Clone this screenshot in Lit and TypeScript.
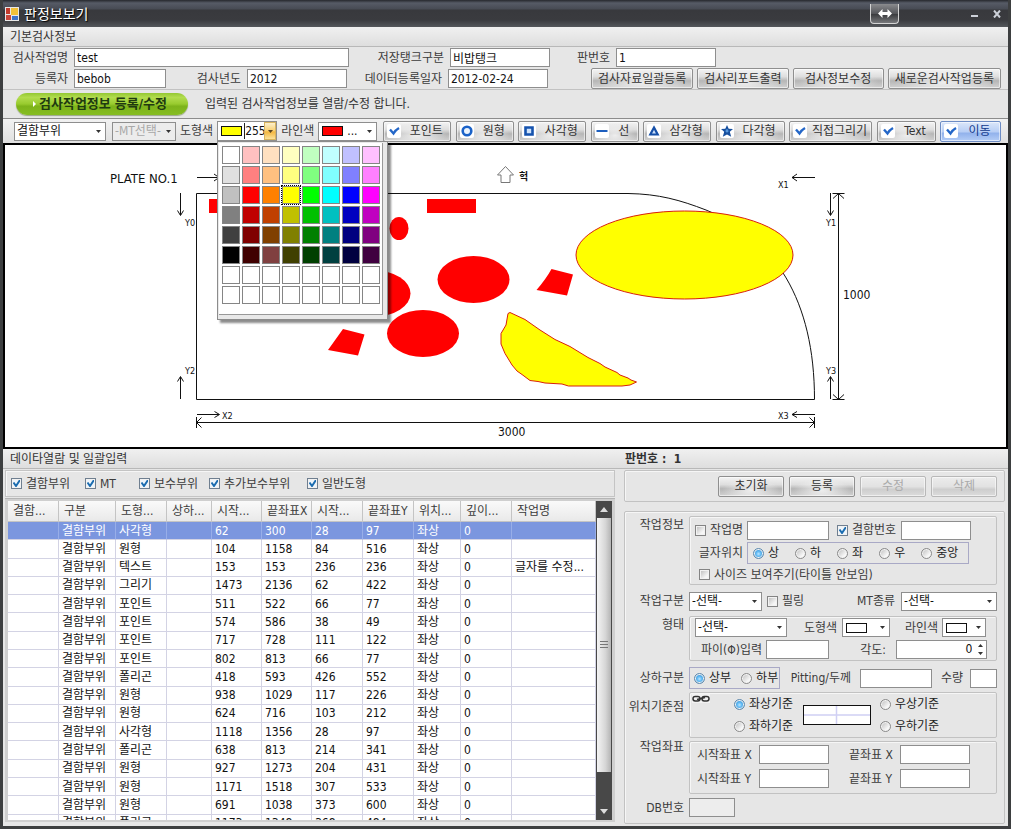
import { LitElement, html, css, svg, nothing } from "lit";
import { customElement, property, state } from "lit/decorators.js";
import { classMap } from "lit/directives/class-map.js";
import { styleMap } from "lit/directives/style-map.js";

const controls = css`
  * { box-sizing: border-box; }
  button, input, select { font: inherit; margin: 0; color: #111; border-radius: 0; }
  label, .label { color: #3c3c3c; white-space: nowrap; }
  .text {
    display: block; width: 100%; min-width: 0; height: 19px; padding: 0 2px;
    border: 1px solid #8e8e8e; background: #fff; outline: none; line-height: 17px;
  }
  .text[readonly] { background: #ededed; }
  select {
    appearance: none; display: block; width: 100%; min-width: 0; height: 19px;
    padding: 0 14px 0 2px; border: 1px solid #8e8e8e; outline: none; line-height: 17px;
    background: #fff url("data:image/svg+xml,%3Csvg xmlns='http://www.w3.org/2000/svg' width='5' height='3'%3E%3Cpath d='M0 0h5L2.500 3z' fill='%23333'/%3E%3C/svg%3E") no-repeat right 4px center;
  }
  select:disabled { color: #a8a8a8; background-color: #ececec; opacity: 1; }
  .check, .radio { display: flex; align-items: center; gap: 4px; }
  .radio { color: #222; }
  .check input {
    appearance: none; flex: none; width: 11px; height: 11px; border: 1px solid #848484;
    background: linear-gradient(135deg, #b9b9b9, #f6f6f6 70%); box-shadow: inset 0 0 0 1px #f2f2f2;
  }
  .check input:checked {
    border-color: #6f7f90;
    background: #eef5fb url("data:image/svg+xml,%3Csvg xmlns='http://www.w3.org/2000/svg' width='9' height='9'%3E%3Cpath d='M1.500 3.500L4 7L8 1' fill='none' stroke='%231b6cb0' stroke-width='2'/%3E%3C/svg%3E") center no-repeat;
  }
  .radio input {
    appearance: none; flex: none; width: 11px; height: 11px; border: 1px solid #8a8a8a;
    border-radius: 50%; background: linear-gradient(135deg, #bcbcbc, #fafafa 75%);
    box-shadow: inset 0 0 0 1px #f4f4f4;
  }
  .radio input:checked {
    border-color: #5e89ad;
    background: radial-gradient(circle at 50% 55%, #bfe6ff 0, #6cc0f6 2px, #3f9ee0 4px, #b8dcf4 5px);
  }
  .btn {
    display: flex; align-items: center; justify-content: center; height: 21px; padding: 0 6px;
    border: 1px solid #8f8f8f; border-radius: 2px; color: #333; white-space: nowrap;
    background:
      radial-gradient(ellipse 45% 60% at 50% 70%, rgba(255,255,255,.75), rgba(255,255,255,0)),
      linear-gradient(180deg, #f4f4f4, #dedede 40%, #b6b6b6 62%, #d2d2d2);
    box-shadow: inset 0 0 0 1px rgba(255,255,255,.55);
  }
  .btn:disabled { color: #aaa; border-color: #b8b8b8; background: linear-gradient(180deg, #ececec, #e2e2e2 50%, #cecece 65%, #dcdcdc); }
  .swatch-select { display: flex; align-items: center; width: 100%; height: 19px; border: 1px solid #8e8e8e; background: #fff; padding-left: 3px; }
  .swatch-select select { flex: 1; width: 0; height: 17px; border: 0; background-color: transparent; padding-left: 4px; }
  .swatch { flex: none; width: 21px; height: 10px; border: 1px solid #111; }
`;

const PALETTE = [
  "#ffffff", "#ffc0c0", "#ffe0c0", "#ffffc0", "#c0ffc0", "#c0ffff", "#c0c0ff", "#ffc0ff",
  "#e0e0e0", "#ff8080", "#ffc080", "#ffff80", "#80ff80", "#80ffff", "#8080ff", "#ff80ff",
  "#c0c0c0", "#ff0000", "#ff8000", "#ffff00", "#00ff00", "#00ffff", "#0000ff", "#ff00ff",
  "#808080", "#c00000", "#c04000", "#c0c000", "#00c000", "#00c0c0", "#0000c0", "#c000c0",
  "#404040", "#800000", "#804000", "#808000", "#008000", "#008080", "#000080", "#800080",
  "#000000", "#400000", "#804040", "#404000", "#004000", "#004040", "#000040", "#400040",
  ...Array(16).fill("#ffffff"),
];

@customElement("color-combo")
class ColorCombo extends LitElement {
  @state() private selected = 19;
  @state() private open = true;

  static styles = [controls, css`
    :host { display: block; position: relative; height: 20px; }
    .field { display: flex; align-items: center; height: 20px; border: 1px solid #8e8e8e; background: #fff; padding-left: 3px; }
    .field input { width: 0; flex: 1; min-width: 0; height: 16px; border: 0; border-left: 1px solid #222; padding: 0; outline: none; margin-left: 2px; }
    .drop { flex: none; width: 12px; height: 18px; padding: 0; border: 1px solid #d8b45e; display: grid; place-items: center;
      background: linear-gradient(180deg, #fdf0cc, #f8cf70 50%, #f3b63e 55%, #fbe29a); }
    .popup {
      position: absolute; z-index: 5; left: 0; top: 20px; width: 171px; height: 179px;
      border: 1px solid #8c8c8c; background: #e9e9e9; padding: 1px 4px 4px 1px;
      box-shadow: 3px 3px 2px rgba(0,0,0,.45);
    }
    .grid {
      height: 100%; display: grid; grid-template-columns: repeat(8, 18px); grid-auto-rows: 18px; gap: 2px;
      padding: 3px 0 0 3px; background: #fff; border-right: 1px solid #999; border-bottom: 1px solid #999;
    }
    .cell { padding: 0; border: 1px solid #858585; }
    .cell.on { outline: 1px dotted #000; }
  `];

  render() {
    return html`
      <div class="field">
        <span class="swatch" style=${styleMap({ background: PALETTE[this.selected] })}></span>
        <input id="rgb" aria-label="도형색" value="255, 255, 0">
        <button class="drop" aria-label="색상 열기" @click=${() => (this.open = !this.open)}>
          <svg width="5" height="3"><path d="M0 0h5L2.500 3z" fill="#5a4520"/></svg>
        </button>
      </div>
      ${this.open ? html`<div class="popup"><div class="grid">
        ${PALETTE.map((c, i) => html`<button aria-label=${c} class=${classMap({ cell: true, on: i === this.selected })}
          style=${styleMap({ background: c })} @click=${() => (this.selected = i)}></button>`)}
      </div></div>` : nothing}
    `;
  }
}

const check = svg`<path d="M3 5.500l3.500 4Q8.500 6 12 4" fill="none" stroke="#2467c8" stroke-width="2.400"/>`;
const TOOLS = [
  { text: "포인트", w: 68, icon: check },
  { text: "원형", w: 58, icon: svg`<circle cx="7" cy="7" r="4.300" fill="#eaf3fd" stroke="#1a62c8" stroke-width="2.600"/>` },
  { text: "사각형", w: 68, icon: svg`<path d="M3.500 3.500h7v7h-7z" fill="#cfe3fb" stroke="#1653ae" stroke-width="2.600"/>` },
  { text: "선", w: 48, icon: svg`<path d="M1.500 7h11" stroke="#1e5fbe" stroke-width="2"/>` },
  { text: "삼각형", w: 68, icon: svg`<path d="M7 3.500l3.700 7H3.300z" fill="#cfe2fa" stroke="#1750a8" stroke-width="2.200"/>` },
  { text: "다각형", w: 69, icon: svg`<path d="M7 1l1.700 3.800 4.300.2-3.200 2.800 1.400 5L7 10.500l-4.200 2.300 1.400-5L1 5l4.300-.2z" fill="#17509f"/><path d="M7 5v3.500M5.500 7h3" stroke="#6fb0f2"/>` },
  { text: "직접그리기", w: 83, icon: check },
  { text: "Text", w: 59, icon: check },
  { text: "이동", w: 61, icon: check, on: true },
];

@customElement("tool-bar")
class ToolBar extends LitElement {
  static styles = [controls, css`
    :host { display: flex; align-items: center; height: 25px; padding: 0 7px 0 11px; gap: 4px;
      border-top: 1px solid #8c8c8c; background: linear-gradient(180deg, #f2f2f2, #e0e0e0); }
    .part { width: 92px; }
    .mt { width: 64px; margin-left: 2px; }
    color-combo { width: 60px; }
    .line { width: 59px; }
    .line .swatch { background: #f00; }
    .tools { flex: 1; display: flex; justify-content: space-between; margin-left: 2px; }
    .tool { gap: 4px; padding: 0 3px; justify-content: flex-start; }
    .tool svg { flex: none; background: #fff; border-radius: 2px; }
    .tool span { flex: 1; text-align: center; }
    .tool.on { color: #123a8c; border-color: #6d8cc4;
      background: linear-gradient(180deg, #dbe7fa, #b9cff5 50%, #93b3ec 60%, #b4cdf6); }
  `];
  render() {
    return html`
      <select class="part" aria-label="부위"><option>결함부위</option></select>
      <select class="mt" aria-label="MT" disabled><option>-MT선택-</option></select>
      <span class="label">도형색</span>
      <color-combo></color-combo>
      <label for="line">라인색</label>
      <span class="swatch-select line"><span class="swatch"></span><select id="line"><option>...</option></select></span>
      <div class="tools">
        ${TOOLS.map((t) => html`<button class=${classMap({ btn: true, tool: true, on: !!t.on })} style=${styleMap({ width: `${t.w}px` })}>
          <svg width="14" height="14">${t.icon}</svg><span>${t.text}</span></button>`)}
      </div>`;
  }
}

@customElement("plate-view")
class PlateView extends LitElement {
  static styles = css`
    :host { display: block; border: 2px solid #000; background: #fff; }
    svg { display: block; width: 100%; height: 302px; }
    .ink { fill: none; stroke: #111; stroke-width: 1; }
    .red { fill: #f00; }
    .yellow { fill: #ff0; stroke: #d8200c; stroke-width: 1; }
    text { font-size: 12px; fill: #111; }
    .title { font-size: 13px; }
    .small { font-size: 9px; }
    .bold { font-size: 10px; font-weight: 700; }
  `;
  render() {
    return html`<svg viewBox="5 145 1001 302" preserveAspectRatio="xMidYMid meet" role="img" aria-label="PLATE NO.1">
      <path class="ink" d="M196.500 399.500V193.500H628C659 194 680 200 706 210C775 238 814.500 300 814.500 399.500Z"/>
      <g class="red">
        <rect x="209" y="199" width="48" height="14"/><rect x="427" y="199" width="49" height="14"/>
        <ellipse cx="399" cy="228.500" rx="9.500" ry="11.500"/>
        <ellipse cx="473.500" cy="279.500" rx="36" ry="23.500"/>
        <ellipse cx="374.500" cy="293.500" rx="36" ry="23"/>
        <ellipse cx="423" cy="333.500" rx="36" ry="23.500"/>
        <path d="M551.500 269L573 274.500L567 295.500L536.500 290Q546 279 551.500 269zM343 329L364.500 334.500L358 355.500L328 350z"/>
      </g>
      <g class="yellow">
        <ellipse cx="684.500" cy="255" rx="108.500" ry="44"/>
        <path stroke-linejoin="round" d="M510 312.500L525 319.500L540 330L555 339.500L570 346.500L588 357.500L600 363.500L605 367L617 372.500L620 375L628 378L631 380L636.500 382L630 385L622 386H568.500L562 384L545 383L538 381.500L530 380.500L522 374.500L517 371L512 365L505 353.500L501 344V333.500L506 325L508 313.500z"/>
      </g>
      <g class="ink">
        <path d="M197 177.500h22M214 174l5 3.500-5 3.500"/>
        <path d="M815 177.500h-23M797 174l-5 3.500 5 3.500"/>
        <path d="M180.500 193v22M177.500 210.500l3 5 3-5M180.500 399v-22M177.500 381.500l3-5 3 5"/>
        <path d="M830.500 193v22M827.500 210.500l3 5 3-5M830.500 399v-22M827.500 381.500l3-5 3 5"/>
        <path d="M197 414.500h22M214.500 411.500l5 3-5 3M815 414.500h-23M797 411.500l-5 3 5 3"/>
        <path d="M196.500 422.500H814.500M196.500 417v11M201.500 417.500l-5 5 5 5M814.500 417v11M809.500 417.500l5 5-5 5"/>
        <path d="M838.500 193.500V399.500M832.500 193.500h12M833 198.500l5.500-5 5.500 5M832.500 399.500h12M833 394.500l5.500 5 5.500-5"/>
        <path stroke="#777" d="M505.500 166.500l8 8.500h-3.500v7.500h-9v-7.500h-3.500z"/>
      </g>
      <text class="title" x="110" y="183">PLATE NO.1</text>
      <text x="498" y="436">3000</text>
      <text x="843" y="299">1000</text>
      <text class="bold" x="519" y="180">헉</text>
      <g>
        <text class="small" x="778" y="188">X1</text><text class="small" x="185" y="226">Y0</text>
        <text class="small" x="826" y="226">Y1</text><text class="small" x="185" y="374">Y2</text>
        <text class="small" x="826" y="374">Y3</text><text class="small" x="222" y="419">X2</text>
        <text class="small" x="778" y="419">X3</text>
      </g>
    </svg>`;
  }
}

const COLUMNS = ["결함...", "구분", "도형...", "상하...", "시작...", "끝좌표X", "시작...", "끝좌표Y", "위치...", "깊이...", "작업명"];
const ROWS: [string, number, number, number, number, string?][] = [
  ["사각형", 62, 300, 28, 97], ["원형", 104, 1158, 84, 516], ["텍스트", 153, 153, 236, 236, "글자를 수정..."],
  ["그리기", 1473, 2136, 62, 422], ["포인트", 511, 522, 66, 77], ["포인트", 574, 586, 38, 49],
  ["포인트", 717, 728, 111, 122], ["포인트", 802, 813, 66, 77], ["폴리곤", 418, 593, 426, 552],
  ["원형", 938, 1029, 117, 226], ["원형", 624, 716, 103, 212], ["사각형", 1118, 1356, 28, 97],
  ["폴리곤", 638, 813, 214, 341], ["원형", 927, 1273, 204, 431], ["원형", 1171, 1518, 307, 533],
  ["원형", 691, 1038, 373, 600], ["폴리곤", 1173, 1348, 368, 484],
];

@customElement("data-list")
class DataList extends LitElement {
  @property({ type: Number }) selected = 0;
  static styles = [controls, css`
    :host { display: flex; flex-direction: column; min-height: 0; padding: 1px 2px 4px 2px; }
    .filters { display: flex; align-items: center; height: 27px; padding: 0 5px; border: 1px solid #c4c4c4; box-shadow: inset 1px 1px 0 #f6f6f6; }
    .filters .check:nth-child(1) { width: 74px; }
    .filters .check:nth-child(2) { width: 54px; }
    .filters .check:nth-child(3) { width: 70px; }
    .filters .check:nth-child(4) { width: 98px; }
    .frame { flex: 1; min-height: 0; display: flex; margin: 1px 0 0; padding: 2px 3px; border-top: 1px solid #b4b4b4; background: #cfcfcf; }
    .scroll { flex: 1; min-width: 0; overflow: hidden; background: #fff; }
    table { width: 100%; height: 332px; border-collapse: separate; border-spacing: 0; table-layout: fixed; }
    th, td { padding: 0 0 0 3px; text-align: left; font-weight: 400; white-space: nowrap; overflow: hidden; line-height: 16px; }
    th { height: 21px; padding-left: 5px; color: #3c3c3c; background: linear-gradient(180deg, #fafafa, #e9e9e9); border-right: 1px solid #c4c4c4; border-bottom: 1px solid #c4c4c4; }
    td { color: #111; border-right: 1px solid #d3d3e4; border-bottom: 1px solid #d3d3e4; }
    .on td { background: #7b96df; color: #fff; border-right-color: #98aee8; }
    .c51 { width: 51px; } .c57 { width: 57px; } .c45 { width: 45px; } .c50 { width: 50px; } .c47 { width: 47px; }
    .bar { flex: none; width: 16px; display: flex; flex-direction: column; background: #484848; }
    .arrow { height: 17px; padding: 0; border: 0; background: none; display: grid; place-items: center; }
    .track { flex: 1; min-height: 0; }
    .thumb { height: 89%; margin: 0 1px; display: grid; place-items: center; background: linear-gradient(90deg, #f4f4f4, #d6d6d6 60%, #b4b4b4); }
  `];
  render() {
    const widths = ["c51", "c57", "c51", "c45", "c50", "c50", "c51", "c51", "c47", "c51", ""];
    return html`
      <div class="filters">
        ${["결함부위", "MT", "보수부위", "추가보수부위", "일반도형"].map((t) => html`<label class="check"><input type="checkbox" checked>${t}</label>`)}
      </div>
      <div class="frame">
        <div class="scroll"><table>
          <thead><tr>${COLUMNS.map((c, i) => html`<th class=${widths[i]}>${c}</th>`)}</tr></thead>
          <tbody>${ROWS.map((r, i) => html`<tr class=${classMap({ on: i === this.selected })} @click=${() => (this.selected = i)}>
            <td></td><td>결함부위</td><td>${r[0]}</td><td></td><td>${r[1]}</td><td>${r[2]}</td><td>${r[3]}</td><td>${r[4]}</td><td>좌상</td><td>0</td><td>${r[5] ?? ""}</td>
          </tr>`)}</tbody>
        </table></div>
        <div class="bar">
          <button class="arrow" aria-label="위로"><svg width="8" height="5"><path d="M0 5L4 0l4 5z" fill="#ddd"/></svg></button>
          <div class="track"><div class="thumb"><svg width="8" height="8"><path d="M0 .5h8M0 3.500h8M0 6.500h8" stroke="#777"/></svg></div></div>
          <button class="arrow" aria-label="아래로"><svg width="8" height="5"><path d="M0 0h8L4 5z" fill="#ddd"/></svg></button>
        </div>
      </div>`;
  }
}

const radio = (name: string, text: string, on = false) =>
  html`<label class="radio"><input type="radio" name=${name} ?checked=${on}>${text}</label>`;

@customElement("job-form")
class JobForm extends LitElement {
  static styles = [controls, css`
    :host { display: flex; flex-direction: column; padding: 1px 3px 2px 7px; gap: 9px; }
    .actions, .form { border: 1px solid #c2c2c2; border-radius: 2px; box-shadow: inset 1px 1px 0 #f6f6f6; }
    .actions { display: flex; justify-content: flex-end; align-items: center; gap: 5px; height: 32px; padding-right: 7px; }
    .actions .btn { width: 66px; }
    .form { flex: 1; display: grid; grid-template-columns: 59px minmax(0, 1fr); column-gap: 5px; align-content: start; padding: 4px 7px 6px 0; }
    .name { text-align: right; color: #3c3c3c; line-height: 18px; white-space: nowrap; }
    .box { border: 1px solid #c2c2c2; border-radius: 2px; box-shadow: inset 1px 1px 0 #f6f6f6; }
    .row { display: grid; align-items: center; }
    .group { display: flex; align-items: center; height: 22px; border: 1px solid #a9a9c6; }
    .r { text-align: right; }

    .info { height: 69px; padding: 3px 0 0 5px; }
    .info1 { grid-template-columns: 52px 82px 8px 58px 6px 70px; height: 20px; }
    .info2 { grid-template-columns: 48px 4px 222px; height: 24px; margin-top: 1px; }
    .info3 { padding-left: 4px; height: 19px; display: flex; align-items: center; }
    .pos { padding-left: 5px; gap: 16px; }
    .kind { grid-template-columns: 73px 5px 90px 36px 8px 96px; height: 20px; margin: 6px 0 5px; }
    .kind-name { margin-top: 7px; }
    .shape { height: 45px; padding: 1px 0 0 5px; display: grid; row-gap: 3px; align-content: start; }
    .shape1 { grid-template-columns: 92px 50px 5px 48px 48px 4px 44px; }
    .shape2 { grid-template-columns: 67px 4px 63px 57px 10px 91px; }
    .side { grid-template-columns: 91px 71px 9px 72px 31px 7px 27px; height: 22px; margin: 6px 0 3px; }
    .side .group { gap: 10px; padding-left: 4px; }
    .side-name { margin-top: 8px; }
    .base { display: grid; grid-template-columns: 44px 69px 68px 9px 60px; grid-template-rows: 22px 22px; align-items: center; height: 46px; }
    .chain { align-self: start; margin: 1px 0 0 2px; }
    .plate { grid-column: 3; grid-row: 1 / 3; }
    .c2 { grid-column: 2; } .c5 { grid-column: 5; }
    .base-name { margin-top: 6px; }
    .xy { height: 53px; padding: 3px 0 0 7px; margin-top: 3px; display: grid; grid-template-columns: 62px 70px 20px 51px 70px; row-gap: 5px; align-content: start; align-items: center; }
    .db { width: 46px; margin-top: 4px; }
    .db-name { margin-top: 5px; }
    .spin { display: flex; align-items: center; height: 19px; border: 1px solid #8e8e8e; background: #fff; padding-right: 3px; }
    .spin .text { border: 0; height: 17px; text-align: right; padding-right: 6px; }
  `];
  render() {
    return html`
      <div class="actions">
        <button class="btn">초기화</button><button class="btn">등록</button>
        <button class="btn" disabled>수정</button><button class="btn" disabled>삭제</button>
      </div>
      <div class="form">
        <div class="name">작업정보</div>
        <div class="box info">
          <div class="row info1">
            <label class="check"><input type="checkbox">작업명</label><input class="text" aria-label="작업명"><span></span>
            <label class="check"><input type="checkbox" checked>결함번호</label><span></span><input class="text" aria-label="결함번호">
          </div>
          <div class="row info2">
            <span class="label r">글자위치</span><span></span>
            <div class="group pos">${radio("pos", "상", true)}${radio("pos", "하")}${radio("pos", "좌")}${radio("pos", "우")}${radio("pos", "중앙")}</div>
          </div>
          <div class="info3"><label class="check"><input type="checkbox">사이즈 보여주기(타이틀 안보임)</label></div>
        </div>

        <label class="name kind-name" for="kind">작업구분</label>
        <div class="row kind">
          <select id="kind"><option>-선택-</option></select><span></span>
          <label class="check"><input type="checkbox">필링</label>
          <label class="r" for="mt">MT종류</label><span></span>
          <select id="mt"><option>-선택-</option></select>
        </div>

        <label class="name" for="shape">형태</label>
        <div class="box shape">
          <div class="row shape1">
            <select id="shape"><option>-선택-</option></select>
            <label class="r" for="fill">도형색</label><span></span>
            <span class="swatch-select"><span class="swatch"></span><select id="fill"><option></option></select></span>
            <label class="r" for="stroke">라인색</label><span></span>
            <span class="swatch-select"><span class="swatch"></span><select id="stroke"><option></option></select></span>
          </div>
          <div class="row shape2">
            <label class="r" for="phi">파이(Φ)입력</label><span></span><input class="text" id="phi">
            <label class="r" for="deg">각도:</label><span></span>
            <span class="spin"><input class="text" id="deg" value="0"><svg width="5" height="11"><path d="M0 3L2.500 0 5 3zM0 8h5L2.500 11z" fill="#333"/></svg></span>
          </div>
        </div>

        <div class="name side-name">상하구분</div>
        <div class="row side">
          <div class="group">${radio("side", "상부", true)}${radio("side", "하부")}</div>
          <label class="r" for="pit">Pitting/두께</label><span></span><input class="text" id="pit">
          <label class="r" for="qty">수량</label><span></span><input class="text" id="qty">
        </div>

        <div class="name base-name">위치기준점</div>
        <div class="box base">
          <svg class="chain" width="18" height="9"><rect width="18" height="9" fill="#f2f2f2"/><g fill="none" stroke="#333" stroke-width="1.500"><rect x="1" y="2.500" width="7" height="4.500" rx="2.200"/><rect x="10" y="2.500" width="7" height="4.500" rx="2.200"/><path d="M5 5.500L13 3.500"/></g></svg>
          ${radio("base", "좌상기준", true)}
          <svg class="plate" width="68" height="20"><rect x=".5" y=".5" width="67" height="19" fill="#fff" stroke="#111"/><path d="M1 10h66M33.500 1v18" stroke="#d0d0f4" stroke-width="1.500"/></svg>
          <span class="c5">${radio("base", "우상기준")}</span>
          <span class="c2">${radio("base", "좌하기준")}</span>
          <span class="c5">${radio("base", "우하기준")}</span>
        </div>

        <div class="name">작업좌표</div>
        <div class="box xy">
          <label for="x1">시작좌표 X</label><input class="text" id="x1"><span></span><label for="x2">끝좌표 X</label><input class="text" id="x2">
          <label for="y1">시작좌표 Y</label><input class="text" id="y1"><span></span><label for="y2">끝좌표 Y</label><input class="text" id="y2">
        </div>

        <label class="name db-name" for="db">DB번호</label>
        <input class="text db" id="db" readonly>
      </div>`;
  }
}

@customElement("app-root")
class AppRoot extends LitElement {
  static styles = [controls, css`
    :host {
      display: flex; flex-direction: column; height: 100vh; min-height: 829px; box-sizing: border-box;
      border: solid #3d3f40; border-width: 0 3px 3px; background: #e6e6e6; overflow: hidden;
      font: 12px/16px "DejaVu Sans Condensed", "Noto Sans", "Noto Sans CJK KR", sans-serif; color: #333;
    }
    .title { display: flex; align-items: center; height: 27px; padding: 0 2px; gap: 5px; color: #fff;
      background: linear-gradient(180deg, #26282d, #565b66 3px, #474b54 9px, #38393d 10px, #3a3b3f 20px, #54575b); }
    .title h1 { flex: 1; margin: 0; font-size: 14px; line-height: 20px; font-weight: 400; text-shadow: 1px 1px 1px #000; }
    .win { padding: 0; border: 0; background: none; display: grid; place-items: center; height: 20px; width: 18px; }
    .swap { width: 29px; height: 20px; margin-right: 61px; border: 1px solid #d4d4d4; border-top: 0; border-radius: 0 0 4px 4px;
      background: linear-gradient(180deg, #8a8b8e, #55565a 50%, #3c3d40 55%, #77787b); }
    .section { height: 20px; padding: 0 7px; line-height: 20px; color: #333; border-bottom: 1px solid #b8b8b8;
      background: linear-gradient(180deg, #f0f0f0, #dedede); }
    .basic { padding-right: 7px; height: 43px; border-bottom: 1px solid #c2c2c2; }
    .line { display: flex; align-items: center; height: 21px; }
    .line label { text-align: right; margin-right: 6px; }
    .l65 { width: 65px; } .l75 { width: 75px; } .l95 { width: 95px; } .l60 { width: 60px; }
    .line .text { flex: none; }
    .w275 { width: 275px; } .w92 { width: 92px; } .w100 { width: 100px; }
    .btns { flex: 1; display: flex; justify-content: flex-end; gap: 4px; }
    .btns .btn { padding: 0 6px; min-width: 91px; }
    .intro { display: flex; align-items: center; gap: 17px; height: 28px; padding: 0 13px; }
    .green { display: flex; align-items: center; justify-content: center; gap: 3px; width: 172px; height: 22px; padding: 0 4px 0 0; border: 0; border-radius: 11px;
      font-size: 13px; font-weight: 700; color: #203a10; background: linear-gradient(180deg, #93c832, #b2dc4e 20%, #98cb2e 50%, #7db31a 60%, #86bd22);
      box-shadow: 0 1px 1px #9aa588; }
    .lower-head { display: grid; grid-template-columns: minmax(0, 1fr) 376px; }
    .lower { flex: 1; min-height: 0; display: grid; grid-template-columns: minmax(0, 1fr) 391px; }
    .plate-no { font-weight: 700; white-space: pre; }
  `];
  render() {
    return html`
      <header class="title">
        <svg width="14" height="14"><rect width="14" height="14" fill="#e8e8e8"/><rect x="1" y="1" width="4" height="6" fill="#c23b2c"/><rect x="1" y="8" width="5" height="5" fill="#c8463a"/><rect x="6" y="1" width="7" height="7" fill="#f2c13a"/><rect x="7" y="9" width="6" height="4" fill="#3f73c8"/></svg>
        <h1>판정보보기</h1>
        <button class="win swap" aria-label="전환"><svg width="14" height="9"><path d="M0 4.500L4.500 0v3h5V0L14 4.500 9.500 9V6h-5v3z" fill="#fff"/></svg></button>
        <button class="win" aria-label="최소화"><svg width="7" height="9"><path d="M0 7h7" stroke="#ccd0d8" stroke-width="2"/></svg></button>
        <button class="win" aria-label="닫기"><svg width="8" height="8"><path d="M1 .5l6 7M7 .5l-6 7" stroke="#ccd0d8" stroke-width="2"/></svg></button>
      </header>
      <div class="section">기본검사정보</div>
      <div class="basic">
        <div class="line">
          <label class="l65" for="job">검사작업명</label><input class="text w275" id="job" value="test">
          <label class="l95" for="tank">저장탱크구분</label><input class="text w100" id="tank" value="비밥탱크">
          <label class="l60" for="no">판번호</label><input class="text w100" id="no" value="1">
        </div>
        <div class="line">
          <label class="l65" for="user">등록자</label><input class="text w92" id="user" value="bebob">
          <label class="l75" for="year">검사년도</label><input class="text w100" id="year" value="2012">
          <label class="l95" for="date">데이터등록일자</label><input class="text w100" id="date" value="2012-02-24">
          <div class="btns">
            <button class="btn">검사자료일괄등록</button><button class="btn">검사리포트출력</button>
            <button class="btn">검사정보수정</button><button class="btn">새로운검사작업등록</button>
          </div>
        </div>
      </div>
      <div class="intro">
        <button class="green"><svg width="3" height="6"><path d="M0 0l3 3-3 3z" fill="#fff"/></svg>검사작업정보 등록/수정</button>
        <span>입력된 검사작업정보를 열람/수정 합니다.</span>
      </div>
      <tool-bar></tool-bar>
      <plate-view></plate-view>
      <div class="section lower-head"><span>데이타열람 및 일괄입력</span><span class="plate-no">판번호 :  1</span></div>
      <div class="lower"><data-list></data-list><job-form></job-form></div>
    `;
  }
}
